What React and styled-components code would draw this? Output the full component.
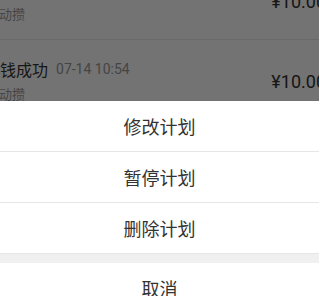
import React from 'react';
import styled, { createGlobalStyle } from 'styled-components';

const GlobalStyle = createGlobalStyle`
  html, body {
    margin: 0;
    padding: 0;
    background: #fff;
    overflow: hidden;
    font-family: "Noto Sans CJK SC", "Noto Sans", Roboto, sans-serif;
  }
`;

const records = [
  { title: '存钱成功', time: '07-14 10:58', sub: '自动攒', amount: '¥10.00' },
  { title: '存钱成功', time: '07-14 10:54', sub: '自动攒', amount: '¥10.00' },
  { title: '存钱成功', time: '07-14 10:50', sub: '自动攒', amount: '¥10.00' },
];

const actions = ['修改计划', '暂停计划', '删除计划'];

const App = () => {
  return (
    <Page>
      <GlobalStyle />
      <List>
        {records.map((r, i) => (
          <Row key={i}>
            <Info>
              <TitleLine>
                <Title>{r.title}</Title>
                <Time>{r.time}</Time>
              </TitleLine>
              <Sub>{r.sub}</Sub>
            </Info>
            <Amount>{r.amount}</Amount>
          </Row>
        ))}
      </List>
      <Mask />
      <Sheet>
        {actions.map((a) => (
          <Action key={a}>{a}</Action>
        ))}
        <Gap />
        <Action>取消</Action>
      </Sheet>
    </Page>
  );
};

const Page = styled.div`
  position: relative;
  width: 319px;
  height: 296px;
  overflow: hidden;
  background: #fff;
`;

const List = styled.div`
  margin-top: -40px;
  margin-left: -16px;
  width: 342px;
`;

const Row = styled.div`
  display: flex;
  justify-content: space-between;
  height: 80px;
  box-sizing: border-box;
  padding-top: 18px;
  border-bottom: 1px solid #e8e8e8;
`;

const Info = styled.div`
  display: flex;
  flex-direction: column;
`;

const TitleLine = styled.div`
  display: flex;
  align-items: center;
  gap: 8px;
  height: 22px;
`;

const Title = styled.span`
  font-size: 16px;
  color: #333;
`;

const Time = styled.span`
  font-family: Roboto, "Noto Sans", sans-serif;
  font-size: 14px;
  color: #999;
`;

const Sub = styled.div`
  margin-top: 5px;
  padding-left: 2px;
  font-size: 13px;
  line-height: 18px;
  color: #999;
`;

const Amount = styled.div`
  align-self: center;
  padding-top: 4px;
  margin-top: -18px;
  font-family: Roboto, "Noto Sans", sans-serif;
  font-size: 18px;
  color: #333;
`;

const Mask = styled.div`
  position: absolute;
  inset: 0;
  background: rgba(0, 0, 0, 0.55);
`;

const Sheet = styled.div`
  position: absolute;
  top: 101px;
  left: 0;
  right: 0;
  display: flex;
  flex-direction: column;
  background: #fff;
`;

const Action = styled.div`
  display: flex;
  align-items: center;
  justify-content: center;
  height: 50px;
  border-bottom: 1px solid #e6e6e6;
  font-size: 18px;
  color: #333;
`;

const Gap = styled.div`
  height: 9px;
  background: #f0f0f0;
`;

export default App;
